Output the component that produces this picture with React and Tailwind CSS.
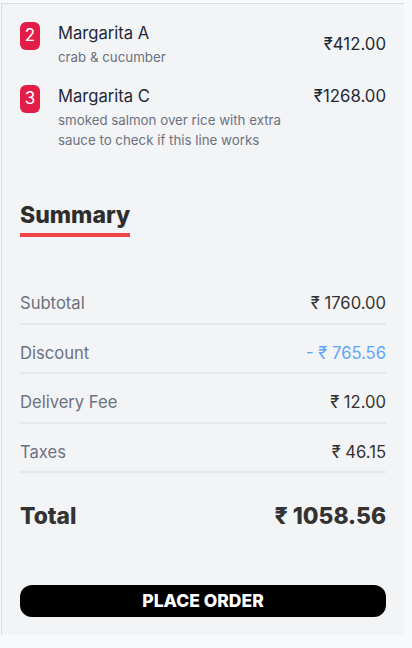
const items = [
  { qty: 2, name: "Margarita A", desc: "crab & cucumber", price: "₹412.00", center: true },
  { qty: 3, name: "Margarita C", desc: "smoked salmon over rice with extra sauce to check if this line works", price: "₹1268.00", center: false },
];

const rows = [
  { label: "Subtotal", value: "₹ 1760.00" },
  { label: "Discount", value: "- ₹ 765.56", accent: true },
  { label: "Delivery Fee", value: "₹ 12.00" },
  { label: "Taxes", value: "₹ 46.15" },
];

export default function App() {
  return (
    <div className="min-h-[648px] bg-[#f8f9fc] pt-[3px] pl-px font-['Inter',sans-serif]">
      <div className="w-[403px] border-t border-l border-[#dcdde0] bg-[#f3f4f6] px-[18px] pt-[17px] pb-[18px]">
        <ul className="flex flex-col gap-[17px]">
          {items.map((it) => (
            <li key={it.name} className={`flex gap-4 ${it.center ? "items-center" : "items-start"}`}>
              <div className="flex flex-1 gap-[18px]">
                <span className="mt-px flex h-7 w-5 shrink-0 items-center justify-center rounded-md bg-[#e11d48] text-[17px] text-white">
                  {it.qty}
                </span>
                <div className="flex flex-col gap-[2px]">
                  <span className="text-[16.6px] leading-6 text-[#1f2937]">{it.name}</span>
                  <span className="text-[13.3px] leading-5 text-[#6b7280]">{it.desc}</span>
                </div>
              </div>
              <span className="text-[16.8px] leading-6 text-[#1f2937]">{it.price}</span>
            </li>
          ))}
        </ul>

        <div className="mt-[51px] mb-[38px]">
          <h2 className="inline-block border-b-4 border-[#ef4444] pb-1 text-[23px] leading-7 font-extrabold text-[#2d2d2d]">
            Summary
          </h2>
        </div>

        <div className="flex flex-col">
          {rows.map((r) => (
            <div key={r.label} className="flex items-center justify-between border-b-2 border-[#e5e7eb] pt-4 pb-[7.5px] text-[16.6px] leading-6">
              <span className="text-[#6b7280]">{r.label}</span>
              <span className={r.accent ? "text-[#60a5fa]" : "text-[#333333]"}>{r.value}</span>
            </div>
          ))}
        </div>

        <div className="mt-[29px] flex items-center justify-between text-[22.8px] leading-7 font-extrabold text-[#333333]">
          <span>Total</span>
          <span>₹ 1058.56</span>
        </div>

        <button className="mt-[55px] flex h-8 w-full items-center justify-center rounded-xl bg-black text-[17.5px] font-extrabold text-white">
          PLACE ORDER
        </button>
      </div>
    </div>
  );
}
